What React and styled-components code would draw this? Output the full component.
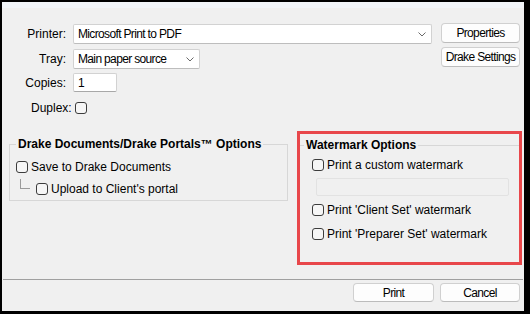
import React from "react";
import styled, { createGlobalStyle } from "styled-components";

const GlobalStyle = createGlobalStyle`
    html, body {
        margin: 0;
        padding: 0;
        background: #000;
    }
    body {
        font-family: "Liberation Sans", Arial, sans-serif;
        font-size: 12px;
        color: #000;
    }
`;

const Window = styled.div`
    box-sizing: border-box;
    width: 530px;
    height: 314px;
    display: flex;
    flex-direction: column;
    background: #f0f0f0;
    border-style: solid;
    border-color: #000;
    border-width: 2px 6px 3px 2px;
    border-top-right-radius: 6px;
    overflow: hidden;
`;

const TopStrip = styled.div`
    height: 6px;
    background: #f2f5f9;
`;

const Header = styled.div`
    display: flex;
    align-items: flex-start;
    padding: 15px 4px 0 18px;
`;

const FieldGrid = styled.div`
    display: grid;
    grid-template-columns: 46px 359px;
    grid-template-rows: 21px 20px 20px 22px;
    column-gap: 7px;
    row-gap: 4px;
    margin-top: 1px;
`;

const FieldLabel = styled.label`
    display: flex;
    align-items: center;
    justify-content: flex-end;
    height: 20px;
    white-space: nowrap;
`;

const DuplexRow = styled.label`
    grid-column: 1 / -1;
    display: flex;
    align-items: center;
    gap: 3px;
    padding-left: 11px;
`;

const Combo = styled.div`
    box-sizing: border-box;
    display: flex;
    align-items: center;
    justify-content: space-between;
    width: ${(p) => p.$width}px;
    height: 20px;
    padding: 0 5px 0 4px;
    background: #fff;
    border: 1px solid #d2d2d2;
    border-bottom-color: #bdbdbd;
    border-radius: 2px;
    letter-spacing: -0.65px;
`;

const TextBox = styled.div`
    box-sizing: border-box;
    display: flex;
    align-items: center;
    width: ${(p) => p.$width}px;
    height: 19px;
    padding: 0 4px;
    background: #fff;
    border: 1px solid #d2d2d2;
    border-bottom-color: #a8a8a8;
    border-radius: 2px;
    letter-spacing: -0.65px;
`;

const SideButtons = styled.div`
    display: flex;
    flex-direction: column;
    gap: 4px;
    margin-left: 9px;
`;

const Button = styled.button`
    box-sizing: border-box;
    width: ${(p) => p.$width || 80}px;
    height: ${(p) => p.$height || 20}px;
    padding: 0;
    font-family: inherit;
    font-size: 12px;
    letter-spacing: -0.65px;
    color: #000;
    background: #fdfdfd;
    border: 1px solid #d0d0d0;
    border-bottom-color: #bcbcbc;
    border-radius: 4px;
`;

const OptionsRow = styled.div`
    display: flex;
    align-items: flex-start;
    gap: 9px;
    margin-top: 12px;
    padding-left: 7px;
`;

const GroupBox = styled.fieldset`
    box-sizing: border-box;
    width: 279px;
    margin: 6px 0 0 0;
    padding: 6px 6px 1px 6px;
    border: 1px solid #d7d7d7;
    display: flex;
    flex-direction: column;
    gap: 2px;
`;

const GroupTitle = styled.legend`
    padding: 0 2px;
    font-weight: bold;
    font-size: 12px;
    line-height: 14px;
`;

const Highlight = styled.div`
    box-sizing: border-box;
    width: 225px;
    height: 134px;
    border: 3px solid #e8474b;
`;

const WatermarkBox = styled.fieldset`
    margin: 4px 0 0 0;
    padding: 3px 0 0 12px;
    border: none;
    border-top: 1px solid #d7d7d7;
    display: flex;
    flex-direction: column;
    align-items: flex-start;
`;

const WatermarkTitle = styled(GroupTitle)`
    margin-left: -8px;
`;

const CheckRow = styled.label`
    display: flex;
    align-items: center;
    gap: 3px;
    height: 20px;
    margin-top: ${(p) => p.$gap || 0}px;
    padding-left: ${(p) => p.$indent || 0}px;
    white-space: nowrap;
`;

const Box = styled.span`
    box-sizing: border-box;
    display: inline-block;
    flex: none;
    width: 12px;
    height: 12px;
    border: 1px solid #3c3c3c;
    border-radius: 3px;
    background: #f6f6f6;
`;

const TreeLine = styled.span`
    align-self: flex-start;
    width: 9px;
    height: 9px;
    margin-right: 3px;
    border-left: 1px solid #9a9a9a;
    border-bottom: 1px solid #9a9a9a;
`;

const DisabledInput = styled.div`
    box-sizing: border-box;
    width: 193px;
    height: 18px;
    margin: 3px 0 4px 4px;
    background: #f0f0f0;
    border: 1px solid #e2e2e2;
    border-radius: 2px;
`;

const Spacer = styled.div`
    flex: 1;
`;

const Separator = styled.div`
    height: 1px;
    background: #a0a0a0;
    margin: 0 1px;
`;

const Footer = styled.div`
    display: flex;
    justify-content: flex-end;
    gap: 6px;
    padding: 3px 4px 9px 0;
`;

const Chevron = () => (
    <svg width="8" height="5" viewBox="0 0 8 5">
        <path d="M0.5 0.5 L4 4 L7.5 0.5" fill="none" stroke="#6a6a6a" strokeWidth="1" />
    </svg>
);

const App = () => {
    return (
        <>
            <GlobalStyle />
            <Window>
                <TopStrip />
                <Header>
                    <FieldGrid>
                        <FieldLabel>Printer:</FieldLabel>
                        <Combo $width={359}>
                            <span>Microsoft Print to PDF</span>
                            <Chevron />
                        </Combo>
                        <FieldLabel>Tray:</FieldLabel>
                        <Combo $width={127}>
                            <span>Main paper source</span>
                            <Chevron />
                        </Combo>
                        <FieldLabel>Copies:</FieldLabel>
                        <TextBox $width={44}>1</TextBox>
                        <DuplexRow>
                            Duplex:
                            <Box />
                        </DuplexRow>
                    </FieldGrid>
                    <SideButtons>
                        <Button $width={79} $height={20}>Properties</Button>
                        <Button $width={79} $height={20}>Drake Settings</Button>
                    </SideButtons>
                </Header>

                <OptionsRow>
                    <GroupBox>
                        <GroupTitle>Drake Documents/Drake Portals™ Options</GroupTitle>
                        <CheckRow>
                            <Box />
                            Save to Drake Documents
                        </CheckRow>
                        <CheckRow $indent={4}>
                            <TreeLine />
                            <Box />
                            Upload to Client's portal
                        </CheckRow>
                    </GroupBox>

                    <Highlight>
                        <WatermarkBox>
                            <WatermarkTitle>Watermark Options</WatermarkTitle>
                            <CheckRow>
                                <Box />
                                Print a custom watermark
                            </CheckRow>
                            <DisabledInput />
                            <CheckRow>
                                <Box />
                                Print 'Client Set' watermark
                            </CheckRow>
                            <CheckRow $gap={4}>
                                <Box />
                                Print 'Preparer Set' watermark
                            </CheckRow>
                        </WatermarkBox>
                    </Highlight>
                </OptionsRow>

                <Spacer />
                <Separator />
                <Footer>
                    <Button $width={81} $height={19}>Print</Button>
                    <Button $width={80} $height={19}>Cancel</Button>
                </Footer>
            </Window>
        </>
    );
};

export default App;
